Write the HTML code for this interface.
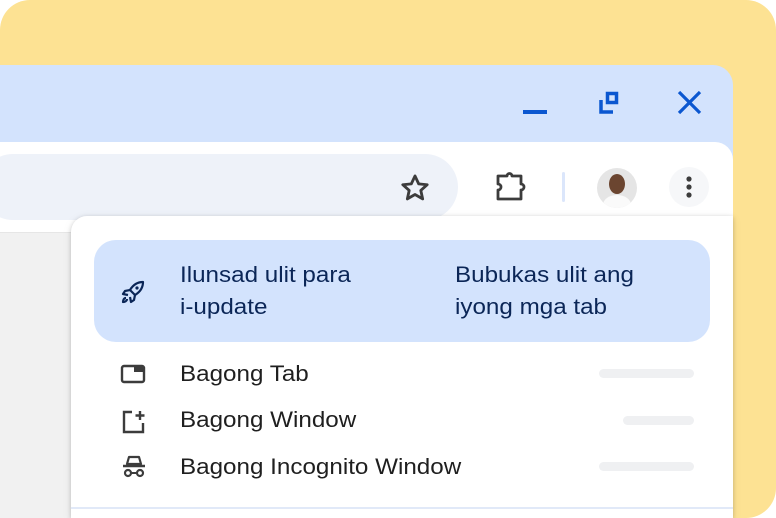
<!DOCTYPE html>
<html><head><meta charset="utf-8"><style>
*{margin:0;padding:0;box-sizing:border-box}
html,body{width:776px;height:518px;overflow:hidden;background:#fff;font-family:"Liberation Sans",sans-serif;position:relative}
.y{position:absolute;left:0;top:0;width:776px;height:518px;background:#fde293;border-radius:30px}
.win{position:absolute;left:-20px;top:65px;width:753px;height:453px;background:#d3e3fd;border-radius:20px 20px 0 0;overflow:hidden}
.tool{position:absolute;left:0;top:77px;width:753px;height:376px;background:#fff;border-radius:18px 18px 0 0}
.omni{position:absolute;left:0;top:12px;width:478px;height:66px;background:#eef2f9;border-radius:33px}
.content{position:absolute;left:0;top:90px;width:753px;height:290px;background:#f1f1f1;border-top:1px solid #e6e6e6}
.menu{position:absolute;left:71px;top:216px;width:662px;height:302px;background:#fff;border-radius:16px 0 0 0;box-shadow:0 1px 4px rgba(0,0,0,.18),0 2px 10px rgba(0,0,0,.08)}
.hl{position:absolute;left:94px;top:240px;width:616px;height:102px;background:#d3e3fd;border-radius:22px}
.t{position:absolute;font-size:22px;color:#1f1f1f;line-height:32px;white-space:nowrap;transform:scaleX(1.1);transform-origin:0 0}
.b{color:#0b2657}
.bar{position:absolute;height:9px;background:#eff0f2;border-radius:5px}
svg{position:absolute}
</style></head><body>
<div class="y"></div>
<div class="win">
 <div class="tool"><div class="omni"></div><div class="content"></div></div>
</div>
<svg style="left:520px;top:88px" width="200" height="32" viewBox="520 88 200 32">
 <rect x="523" y="110" width="24" height="4" fill="#0b57d0"/>
 <path d="M601 100v12h12" fill="none" stroke="#0b57d0" stroke-width="3.5"/>
 <rect x="607.5" y="93.5" width="9" height="9" fill="none" stroke="#0b57d0" stroke-width="3.5"/>
 <path d="M679 92l21 21M700 92l-21 21" stroke="#0b57d0" stroke-width="3.2"/>
</svg>
<svg style="left:398px;top:171px" width="34" height="34" viewBox="0 0 24 24"><path d="M12 3.5l2.6 5.6 6 .6-4.5 4 1.3 6-5.4-3.1-5.4 3.1 1.3-6-4.5-4 6-.6z" fill="none" stroke="#3c3c3c" stroke-width="2" stroke-linejoin="round"/></svg>
<svg style="left:494px;top:170px" width="36" height="34" viewBox="0 0 36 34"><path d="M4 6h9a2.5 2.5 0 0 1 5 0h9v8a3 3 0 0 1 0 6v9H4v-9a3 3 0 0 0 0-6z" fill="none" stroke="#3c3c3c" stroke-width="2.8" stroke-linejoin="round"/></svg>
<div style="position:absolute;left:562px;top:172px;width:3px;height:30px;background:#dbe6fb;border-radius:2px"></div>
<div style="position:absolute;left:597px;top:168px;width:40px;height:40px;border-radius:50%;background:#e5e5e5;overflow:hidden">
 <div style="position:absolute;left:12px;top:6px;width:16px;height:20px;border-radius:50%;background:#6b4530"></div>
 <div style="position:absolute;left:6px;top:27px;width:28px;height:20px;border-radius:50% 50% 0 0;background:#fafafa"></div>
</div>
<div style="position:absolute;left:669px;top:167px;width:40px;height:40px;border-radius:50%;background:#f6f7f9"></div>
<svg style="left:682px;top:174px" width="14" height="26"><circle cx="7" cy="5" r="2.6" fill="#3c3c3c"/><circle cx="7" cy="13" r="2.6" fill="#3c3c3c"/><circle cx="7" cy="21" r="2.6" fill="#3c3c3c"/></svg>
<div class="menu"></div>
<div style="position:absolute;left:71px;top:507px;width:662px;height:2px;background:#e1e9f8"></div>
<div class="hl"></div>
<svg style="left:119px;top:278px" width="28" height="28" viewBox="0 0 28 28"><g fill="none" stroke="#0b2657" stroke-width="2.2" stroke-linejoin="round"><path d="M24 4c-6 0-10 3-13 8l5 5c5-3 8-7 8-13z"/><path d="M11 12l-5 1-2 3 5 1M16 17l-1 5-3 2-1-5"/><path d="M7 20c-2 0-3 2-3 4 2 0 4-1 4-3"/></g><circle cx="18" cy="10" r="1.6" fill="#0b2657"/></svg>
<div class="t b" style="left:180px;top:259px">Ilunsad ulit para<br>i-update</div>
<div class="t b" style="left:455px;top:259px">Bubukas ulit ang<br>iyong mga tab</div>
<svg style="left:120px;top:364px" width="26" height="20" viewBox="0 0 26 20"><rect x="2" y="2" width="22" height="16" rx="2" fill="none" stroke="#3c3c3c" stroke-width="2.4"/><rect x="14" y="2" width="10" height="6" fill="#3c3c3c"/></svg>
<div class="t" style="left:180px;top:358px">Bagong Tab</div>
<svg style="left:121px;top:409px" width="26" height="26" viewBox="0 0 26 26"><path d="M11 3H3v20h19v-9" fill="none" stroke="#3c3c3c" stroke-width="2.4"/><path d="M19 2v9M14.5 6.5h9" stroke="#3c3c3c" stroke-width="2.4"/></svg>
<div class="t" style="left:180px;top:404px">Bagong Window</div>
<svg style="left:121px;top:454px" width="26" height="26" viewBox="0 0 26 26"><path d="M8 3h10l2 7H6z" fill="none" stroke="#3c3c3c" stroke-width="2.2" stroke-linejoin="round"/><path d="M2 12h22" stroke="#3c3c3c" stroke-width="2.4"/><circle cx="7" cy="19" r="3" fill="none" stroke="#3c3c3c" stroke-width="2.2"/><circle cx="19" cy="19" r="3" fill="none" stroke="#3c3c3c" stroke-width="2.2"/><path d="M10 19h6" stroke="#3c3c3c" stroke-width="2"/></svg>
<div class="t" style="left:180px;top:451px">Bagong Incognito Window</div>
<div class="bar" style="left:599px;top:369px;width:95px"></div>
<div class="bar" style="left:623px;top:416px;width:71px"></div>
<div class="bar" style="left:599px;top:462px;width:95px"></div>
</body></html>
